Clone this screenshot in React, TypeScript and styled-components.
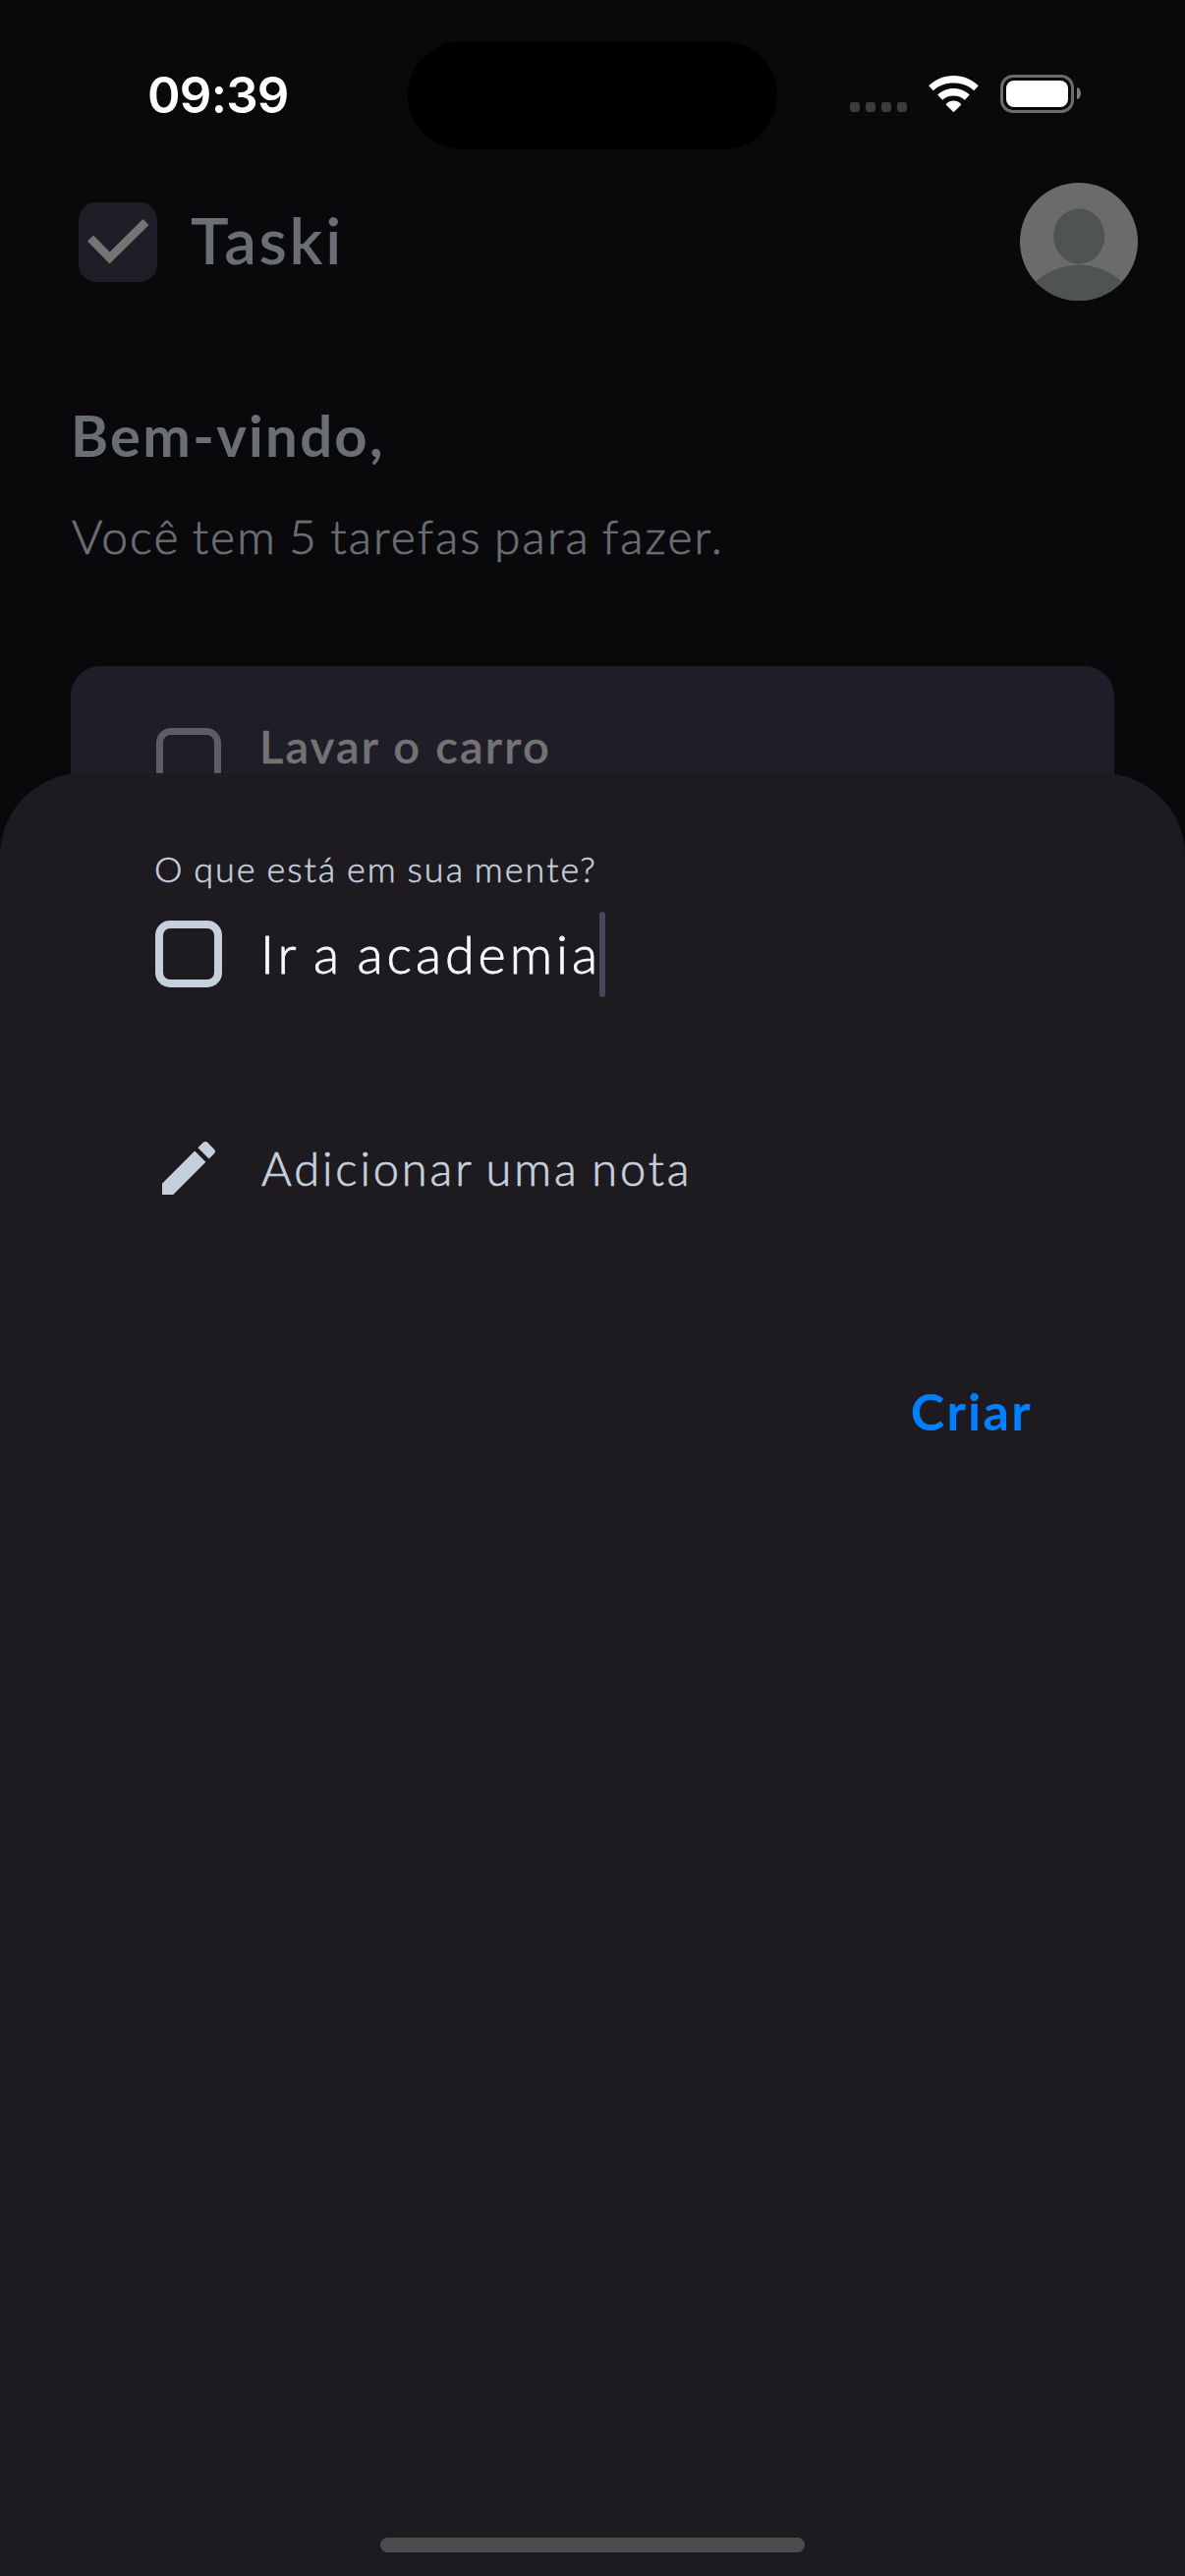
import React from "react";
import styled, { createGlobalStyle } from "styled-components";

const Global = createGlobalStyle`
  html, body { margin: 0; background: #09090b; }
  *, *::before, *::after { box-sizing: border-box; }
`;

const Screen = styled.div`
  position: relative;
  width: 1206px;
  height: 2622px;
  overflow: hidden;
  background: #09090b;
  font-family: Lato, "Open Sans", sans-serif;
`;

const StatusBar = styled.header`
  display: flex;
  justify-content: space-between;
  align-items: flex-start;
  height: 186px;
  padding: 64px 106px 0 150px;
`;

const Text = styled.span<{
  $size: number;
  $line: number;
  $weight?: number;
  $color: string;
  $track?: number;
  $word?: number;
  $stroke?: number;
}>`
  display: block;
  white-space: nowrap;
  font-size: ${(p) => p.$size}px;
  line-height: ${(p) => p.$line}px;
  font-weight: ${(p) => p.$weight ?? 400};
  letter-spacing: ${(p) => p.$track ?? 0}px;
  word-spacing: ${(p) => p.$word ?? 0}px;
  color: ${(p) => p.$color};
  -webkit-text-stroke: ${(p) => p.$stroke ?? 0}px ${(p) => p.$color};
`;

const Clock = styled(Text)`
  font-family: Inter, sans-serif;
`;

const Island = styled.div`
  position: absolute;
  top: 42px;
  left: 415px;
  width: 376px;
  height: 110px;
  border-radius: 55px;
  background: #000;
`;

const StatusIcons = styled.div`
  display: flex;
  align-items: flex-start;
  padding-top: 12px;
`;

const Dots = styled.div`
  display: flex;
  gap: 6px;
  margin: 28px 22px 0 0;
`;

const Dot = styled.i`
  width: 10px;
  height: 10px;
  border-radius: 3px;
  background: #3b3b3d;
`;

const WifiIcon = styled.svg`
  display: block;
  margin: 1px 22px 0 0;
`;

const Battery = styled.div`
  width: 75px;
  height: 39px;
  padding: 3px;
  border: 3px solid #6b6b6c;
  border-radius: 13px;
  &::after {
    content: "";
    display: block;
    height: 27px;
    border-radius: 8px;
    background: #fff;
  }
`;

const BatteryTip = styled.i`
  width: 4px;
  height: 12px;
  margin: 13px 0 0 3px;
  border-radius: 0 4px 4px 0 / 0 6px 6px 0;
  background: #7b7b7c;
`;

const Header = styled.div`
  display: flex;
  align-items: center;
  height: 120px;
  padding: 0 48px 0 80px;
`;

const Avatar = styled.svg`
  display: block;
  margin-left: auto;
`;

const Brand = styled(Text)`
  margin: -4px 0 0 34px;
`;

const Welcome = styled.section`
  padding: 97px 72px 0;
`;

const Subtitle = styled(Text)`
  margin: 9px 0 0 1px;
`;

const Card = styled.div`
  display: flex;
  margin: 79px 72px 0;
  height: 180px;
  padding: 63px 87px 0;
  border-radius: 30px;
  background: #1f1d27;
`;

const CardCheck = styled.span`
  flex: none;
  width: 66px;
  height: 66px;
  border: 7px solid #5b5e67;
  border-radius: 15px;
`;

const CardTitle = styled(Text)`
  margin: -12px 0 0 39px;
`;

const Check = styled.span`
  flex: none;
  width: 68px;
  height: 68px;
  margin-top: -1px;
  border: 8px solid #c6d0dd;
  border-radius: 15px;
`;

const Sheet = styled.main`
  position: absolute;
  inset: 787px 0 0;
  display: flex;
  flex-direction: column;
  padding: 75px 157px 24px;
  border-radius: 84px 84px 0 0;
  background: #1e1b20;
`;

const InputRow = styled.div`
  display: flex;
  align-items: center;
  height: 87px;
  margin: 22px 0 0 1px;
`;

const InputText = styled(Text)`
  margin: -1px -2px 0 39px;
`;

const Caret = styled.i`
  width: 6px;
  height: 87px;
  border-radius: 3px;
  background: #4a4458;
`;

const NoteRow = styled.div`
  display: flex;
  align-items: center;
  height: 72px;
  margin: 138px 0 0 -1px;
`;

const NoteText = styled(Text)`
  margin-left: 38px;
`;

const Create = styled.button`
  align-self: flex-end;
  margin: 175px -2px 0 0;
  padding: 0;
  border: 0;
  background: none;
  font-family: inherit;
`;

const HomeBar = styled.div`
  width: 432px;
  height: 15px;
  margin: auto auto 0;
  border-radius: 8px;
  background: #4d4d4d;
`;

export default function App() {
  return (
    <Screen>
      <Global />
      <StatusBar>
        <Clock $size={51} $line={65} $weight={600} $track={-0.8} $color="#fff">09:39</Clock>
        <Island />
        <StatusIcons>
          <Dots><Dot /><Dot /><Dot /><Dot /></Dots>
          <WifiIcon width="51" height="37" viewBox="0 0 51 37" fill="#fff">
            <path d="M25.5 0C35.3 0 44.3 3.8 50.8 10.2L46.2 15.2C40.8 10.1 33.5 7.5 25.5 7.5S10.2 10.1 4.8 15.2L.2 10.2C6.7 3.8 15.7 0 25.5 0Z" />
            <path d="M25.5 13C31.8 13 37.5 15.4 41.8 19.6L36.9 24.7C33.9 21.8 30 20.4 25.5 20.4S17.1 21.8 14.1 24.7L9.2 19.6C13.5 15.4 19.2 13 25.5 13Z" />
            <path d="M25.5 25.5C28.4 25.5 31 26.6 32.9 28.7C33.3 29.1 33.3 29.6 32.9 30L26.3 36.5C25.8 37 25.2 37 24.7 36.5L18.1 30C17.7 29.6 17.7 29.1 18.1 28.7C20 26.6 22.6 25.5 25.5 25.5Z" />
          </WifiIcon>
          <Battery />
          <BatteryTip />
        </StatusIcons>
      </StatusBar>

      <Header>
        <svg width="80" height="81" viewBox="0 0 80 81">
          <rect width="80" height="81" rx="18" fill="#1f1d27" />
          <path d="M12 36.5L31.6 56.5L68.5 20" fill="none" stroke="#757575" strokeWidth="8.5" />
        </svg>
        <Brand $size={65} $line={80} $weight={600} $track={2.7} $color="#6a6f75">Taski</Brand>
        <Avatar width="120" height="120" viewBox="0 0 120 120">
          <clipPath id="face"><circle cx="60" cy="60" r="60" /></clipPath>
          <g clipPath="url(#face)">
            <rect width="120" height="120" fill="#6a6b6a" />
            <ellipse cx="60.2" cy="54.5" rx="26" ry="28.2" fill="#505353" />
            <circle cx="60" cy="149" r="65.3" fill="#505353" />
          </g>
        </Avatar>
      </Header>

      <Welcome>
        <Text $size={58} $line={80} $weight={700} $track={2.3} $color="#6a6f75">Bem-vindo,</Text>
        <Subtitle $size={48} $line={107} $weight={300} $track={2.1} $word={-3} $stroke={0.7} $color="#6a6f75">Você tem 5 tarefas para fazer.</Subtitle>
      </Welcome>

      <Card>
        <CardCheck />
        <CardTitle $size={47} $line={60} $weight={600} $track={2.2} $stroke={0.3} $color="#737373">Lavar o carro</CardTitle>
      </Card>

      <Sheet>
        <Text $size={36} $line={44} $weight={300} $track={2} $word={-2} $stroke={0.5} $color="#c6d0dd">O que está em sua mente?</Text>
        <InputRow>
          <Check />
          <InputText $size={54} $line={80} $weight={300} $track={3.9} $word={-4} $stroke={0.8} $color="#f8f8fa">Ir a academia</InputText>
          <Caret />
        </InputRow>
        <NoteRow>
          <svg width="72" height="72" viewBox="0 0 24 24" fill="#c6d0dd">
            <path d="M3 17.25V21h3.75L17.81 9.94l-3.75-3.75L3 17.25zM20.71 7.04c.39-.39.39-1.02 0-1.41l-2.34-2.34c-.39-.39-1.02-.39-1.41 0l-1.83 1.83 3.75 3.75 1.83-1.83z" />
          </svg>
          <NoteText $size={47} $line={72} $weight={300} $track={2.9} $word={-3} $stroke={0.7} $color="#c6d0dd">Adicionar uma nota</NoteText>
        </NoteRow>
        <Create>
          <Text $size={52} $line={72} $weight={700} $track={2.3} $color="#007fff">Criar</Text>
        </Create>
        <HomeBar />
      </Sheet>
    </Screen>
  );
}
